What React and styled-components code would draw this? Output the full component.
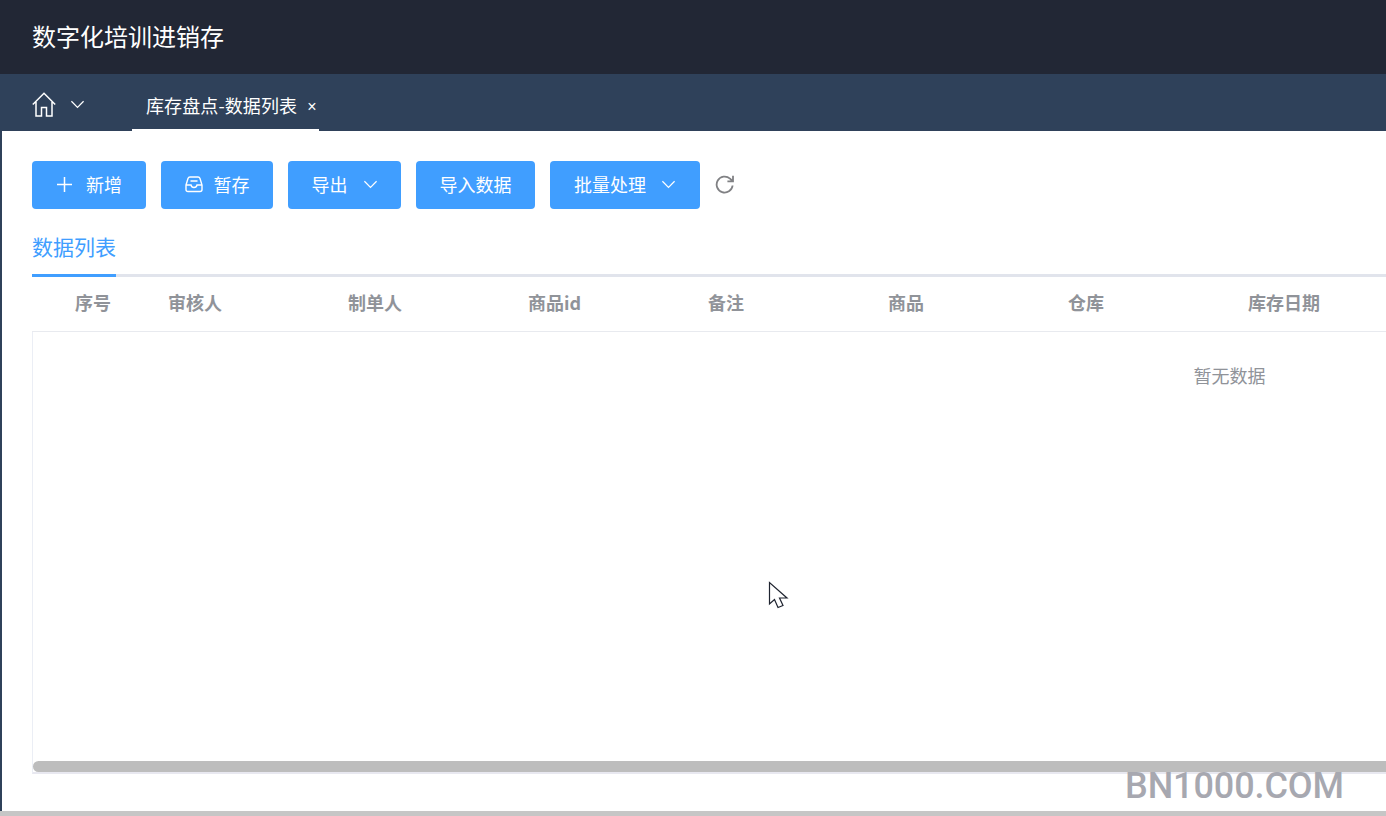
import React from "react"
import styled, { createGlobalStyle } from "styled-components"

const GlobalStyle = createGlobalStyle`
  * { box-sizing: border-box; }
  html, body { margin: 0; padding: 0; height: 100%; overflow: hidden; }
  body { font-family: "Noto Sans CJK SC", "Liberation Sans", sans-serif; background: #2f415a; }
`

const Page = styled.div`
  position: relative;
  width: 1386px;
  height: 816px;
  overflow: hidden;
  display: flex;
  flex-direction: column;
`

const TopBar = styled.div`
  flex: 0 0 74px;
  display: flex;
  align-items: center;
  padding: 0 32px 4px;
  background: #222735;
  color: #fff;
  font-size: 24px;
`

const TabBar = styled.div`
  flex: 0 0 57px;
  display: flex;
  background: #2f415a;
  padding-left: 32px;
`

const HomeTab = styled.div`
  width: 100px;
  display: flex;
  align-items: center;
  gap: 14px;
  padding-top: 3px;
  color: #fff;
`

const ActiveTab = styled.div`
  width: 187px;
  display: flex;
  align-items: center;
  gap: 10px;
  padding: 6px 0 0 14px;
  color: #fff;
  font-size: 18px;
  letter-spacing: 0.1px;
  border-bottom: 2px solid #fff;
`

const CloseMark = styled.span`
  font-size: 16px;
  font-family: "Liberation Sans", sans-serif;
  line-height: 1;
  margin-top: 4px;
`

const Content = styled.div`
  flex: 1;
  margin-left: 2px;
  padding: 30px 0 0 30px;
  background: #fff;
  overflow: hidden;
  display: flex;
  flex-direction: column;
`

const Toolbar = styled.div`
  display: flex;
  align-items: center;
  gap: 15px;
`

const Button = styled.div`
  width: ${props => props.$width}px;
  height: 48px;
  display: flex;
  align-items: center;
  justify-content: center;
  gap: ${props => props.$gap || 0}px;
  padding-bottom: 2px;
  background: #409eff;
  border-radius: 4px;
  color: #fff;
  font-size: 18px;
  line-height: 1;
`

const RefreshIcon = styled.div`
  display: flex;
  color: #808184;
`

const TabTitleRow = styled.div`
  margin-top: 15px;
  height: 53px;
  width: 1354px;
  border-bottom: 3px solid #e1e4ec;
  display: flex;
`

const TabTitle = styled.div`
  width: 84px;
  height: 53px;
  border-bottom: 3px solid #409eff;
  color: #409eff;
  font-size: 21px;
  line-height: 44px;
`

const Table = styled.div`
  width: 2394px;
  display: flex;
  flex-direction: column;
`

const HeaderRow = styled.div`
  display: flex;
  height: 55px;
  padding-bottom: 4px;
  align-items: center;
  border-bottom: 1px solid #e8eaef;
`

const HeaderCell = styled.div`
  width: ${props => props.$width}px;
  padding-left: ${props => props.$pad}px;
  color: #909399;
  font-size: 18px;
  font-weight: 700;
  flex: none;
`

const TableBody = styled.div`
  height: 442px;
  display: flex;
  flex-direction: column;
  border-left: 1px solid #ebeef5;
  border-bottom: 2px solid #e8e8f0;
`

const EmptyText = styled.div`
  flex: 1;
  text-align: center;
  padding-top: 30px;
  color: #909399;
  font-size: 18px;
  line-height: 27px;
`

const ScrollThumb = styled.div`
  height: 11px;
  width: 1500px;
  background: #bdbdbd;
  border-radius: 6px 0 0 6px;
`

const BottomStrip = styled.div`
  flex: 0 0 5px;
  background: #c6c6c6;
`

const Watermark = styled.div`
  position: absolute;
  left: 1125px;
  top: 762px;
  color: #a7a8b0;
  font-family: Roboto, sans-serif;
  font-weight: 500;
  font-size: 36px;
  line-height: 48px;
  letter-spacing: -0.1px;
`

const Cursor = styled.svg`
  position: absolute;
  left: 768px;
  top: 581px;
`

const columns = ["审核人", "制单人", "商品id", "备注", "商品", "仓库", "库存日期"]

const Chevron = ({ size = 16, color = "#fff" }) => (
  <svg width={size} height={size} viewBox="0 0 16 16" fill="none" stroke={color} strokeWidth="1.3">
    <path d="M1.5 4.5 8 11l6.5-6.5" />
  </svg>
)

export default function App() {
  return (
    <Page>
      <GlobalStyle />
      <TopBar>数字化培训进销存</TopBar>
      <TabBar>
        <HomeTab>
          <svg width="24" height="25" viewBox="0 0 24 25" fill="none" stroke="#fff" strokeWidth="1.5">
            <path d="M.8 12.5 12 1.2l11.2 11.3M4 10v14h5.5v-8.500h5V24H20V10" />
          </svg>
          <Chevron size={15} />
        </HomeTab>
        <ActiveTab>
          库存盘点-数据列表
          <CloseMark>×</CloseMark>
        </ActiveTab>
      </TabBar>
      <Content>
        <Toolbar>
          <Button $width={114} $gap={13}>
            <svg width="17" height="17" viewBox="0 0 17 17" stroke="#fff" strokeWidth="1.5">
              <path d="M8.500 1v15M1 8.500h15" />
            </svg>
            新增
          </Button>
          <Button $width={112} $gap={11}>
            <svg width="18" height="17" viewBox="0 0 18 17" fill="none" stroke="#fff" strokeWidth="1.4">
              <path d="M1 9 3 2.500Q3.500 1 5 1h8q1.500 0 2 1.500L17 9v4.500q0 2-2 2H3q-2 0-2-2ZM1 9h5q.5 2.500 3 2.500T12 9h5M5.500 5h7" />
            </svg>
            暂存
          </Button>
          <Button $width={113} $gap={15}>
            导出
            <Chevron size={15} />
          </Button>
          <Button $width={119}>导入数据</Button>
          <Button $width={150} $gap={15}>
            批量处理
            <Chevron size={15} />
          </Button>
          <RefreshIcon>
            <svg width="20" height="20" viewBox="0 0 20 20" fill="none" stroke="currentColor" strokeWidth="1.8">
              <path d="M17.600 10.500A8 8 0 1 1 15 3.600l2.600 2.400M18 .8v5.600h-5.600" />
            </svg>
          </RefreshIcon>
        </Toolbar>
        <TabTitleRow>
          <TabTitle>数据列表</TabTitle>
        </TabTitleRow>
        <Table>
          <HeaderRow>
            <HeaderCell $width={121} $pad={43}>序号</HeaderCell>
            {columns.map(name => (
              <HeaderCell key={name} $width={180} $pad={15}>{name}</HeaderCell>
            ))}
          </HeaderRow>
          <TableBody>
            <EmptyText>暂无数据</EmptyText>
            <ScrollThumb />
          </TableBody>
        </Table>
      </Content>
      <BottomStrip />
      <Watermark>BN1000.COM</Watermark>
      <Cursor width="22" height="30" viewBox="0 0 22 30">
        <path d="M1.500 1.500V23l5-4.500 3.500 8 5-2-3.500-7.500H19Z" fill="#fff" stroke="#1f2430" strokeWidth="1.2" />
      </Cursor>
    </Page>
  )
}
